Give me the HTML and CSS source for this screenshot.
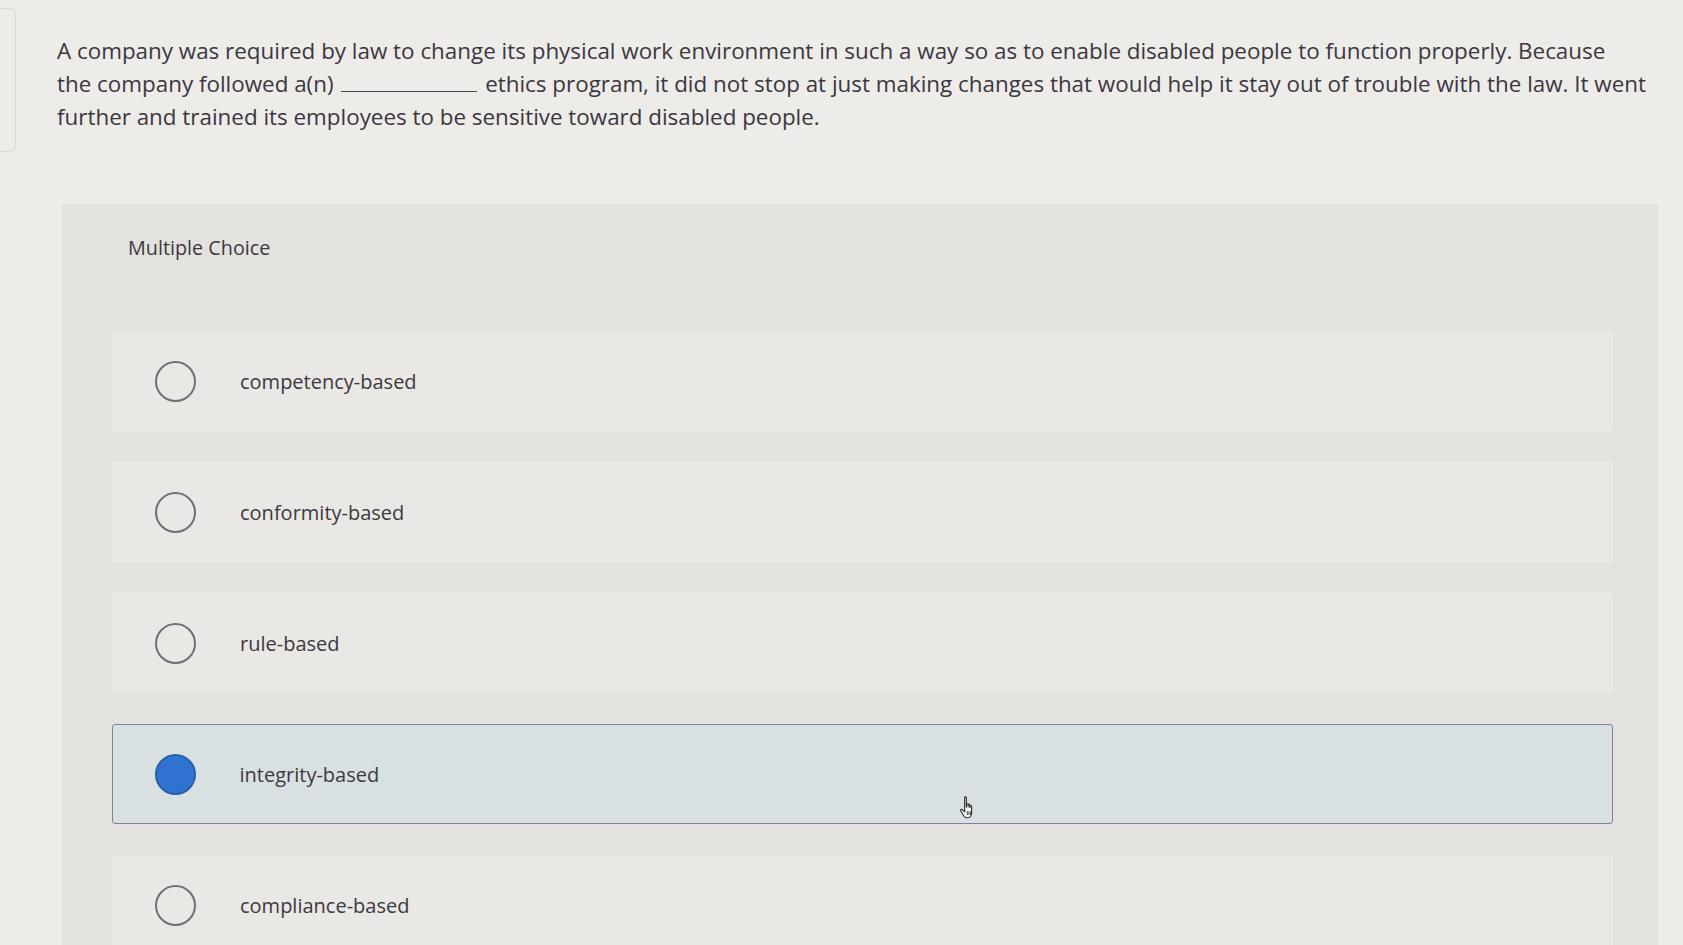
FILE: index.html
```html
<!DOCTYPE html>
<html lang="en">
<head>
<meta charset="utf-8">
<title>Multiple Choice</title>
<link rel="stylesheet" href="styles.css">
</head>
<body>
<div class="page">
  <p class="question">A company was required by law to change its physical work environment in such a way so as to enable disabled people to function properly. Because<br>the company followed a(n) <span class="blank"></span> ethics program, it did not stop at just making changes that would help it stay out of trouble with the law. It went<br>further and trained its employees to be sensitive toward disabled people.</p>

  <section class="panel">
    <div class="panel-title">Multiple Choice</div>
    <div class="options">
      <div class="option"><span class="radio"></span><span class="label">competency-based</span></div>
      <div class="option"><span class="radio"></span><span class="label">conformity-based</span></div>
      <div class="option"><span class="radio"></span><span class="label">rule-based</span></div>
      <div class="option selected"><span class="radio"></span><span class="label">integrity-based</span>
        <svg class="cursor" width="22" height="26" viewBox="0 0 20 24" aria-hidden="true">
          <path d="M6 2.5c0-1 1.6-1 1.6 0V11l0-2.2c0-1 1.6-1 1.6 0V11l0-1.6c0-1 1.6-1 1.6 0V11.5l0-1c0-1 1.6-1 1.6 0v6c0 2.5-1.6 4.5-4 4.5H8.2c-1.6 0-2.6-1-3.4-2.3L2.4 14.6c-.6-1 .6-1.9 1.4-1.1L6 15.5Z" fill="#fff" stroke="#333" stroke-width="1.1" stroke-linejoin="round"/>
          <path d="M8.4 15v3.5M10 15v3.5M11.6 15v3.5" stroke="#333" stroke-width=".9"/>
        </svg>
      </div>
      <div class="option"><span class="radio"></span><span class="label">compliance-based</span></div>
    </div>
  </section>
</div>
</body>
</html>
```

FILE: styles.css
```css
html, body {
  margin: 0;
  padding: 0;
  height: 100%;
  overflow: hidden;
}

body {
  position: relative;
  background: #edece9;
  font-family: "Open Sans", Lato, "Liberation Sans", sans-serif;
  color: #3c3940;
}

/* edge of a neighbouring window at the far left */
body::before {
  content: "";
  position: absolute;
  left: -10px;
  top: 8px;
  width: 24px;
  height: 142px;
  border: 1.5px solid #d9d8d5;
  border-radius: 6px;
}

.page {
  padding: 34px 0 0 57px;
}

.question {
  margin: 0;
  width: 1620px;
  font-size: 22.4px;
  line-height: 33px;
  color: #3b3740;
}

.blank {
  display: inline-block;
  width: 136px;
  border-bottom: 1px solid #4a4650;
  vertical-align: baseline;
  margin: 0 2px;
}

.panel {
  margin-top: 71px;
  margin-left: 5px;
  width: 1596px;
  min-height: 800px;
  background: #e3e2df;
  padding: 32px 0 0;
  box-sizing: border-box;
}

.panel-title {
  padding-left: 66px;
  font-size: 19.8px;
  line-height: 24px;
  color: #3c3940;
}

.options {
  margin-top: 71px;
  padding: 0 45px 0 50px;
  display: flex;
  flex-direction: column;
  gap: 31px;
}

.option {
  position: relative;
  display: flex;
  align-items: center;
  height: 100px;
  padding-left: 43px;
  background: #e9e8e5;
  box-sizing: border-box;
}

.radio {
  width: 41px;
  height: 41px;
  box-sizing: border-box;
  border: 2px solid #726e78;
  border-radius: 50%;
  flex: none;
}

.label {
  margin-left: 44px;
  font-size: 20px;
  color: #3c3940;
}

.option.selected {
  background: #d9e0e2;
  border: 1.5px solid #7c82a3;
  border-radius: 3px;
  padding-left: 41.5px;
}

.option.selected .radio {
  background: #2f72cf;
  border-color: #2a5fa8;
}

.cursor {
  position: absolute;
  left: 845px;
  top: 70px;
}
```
